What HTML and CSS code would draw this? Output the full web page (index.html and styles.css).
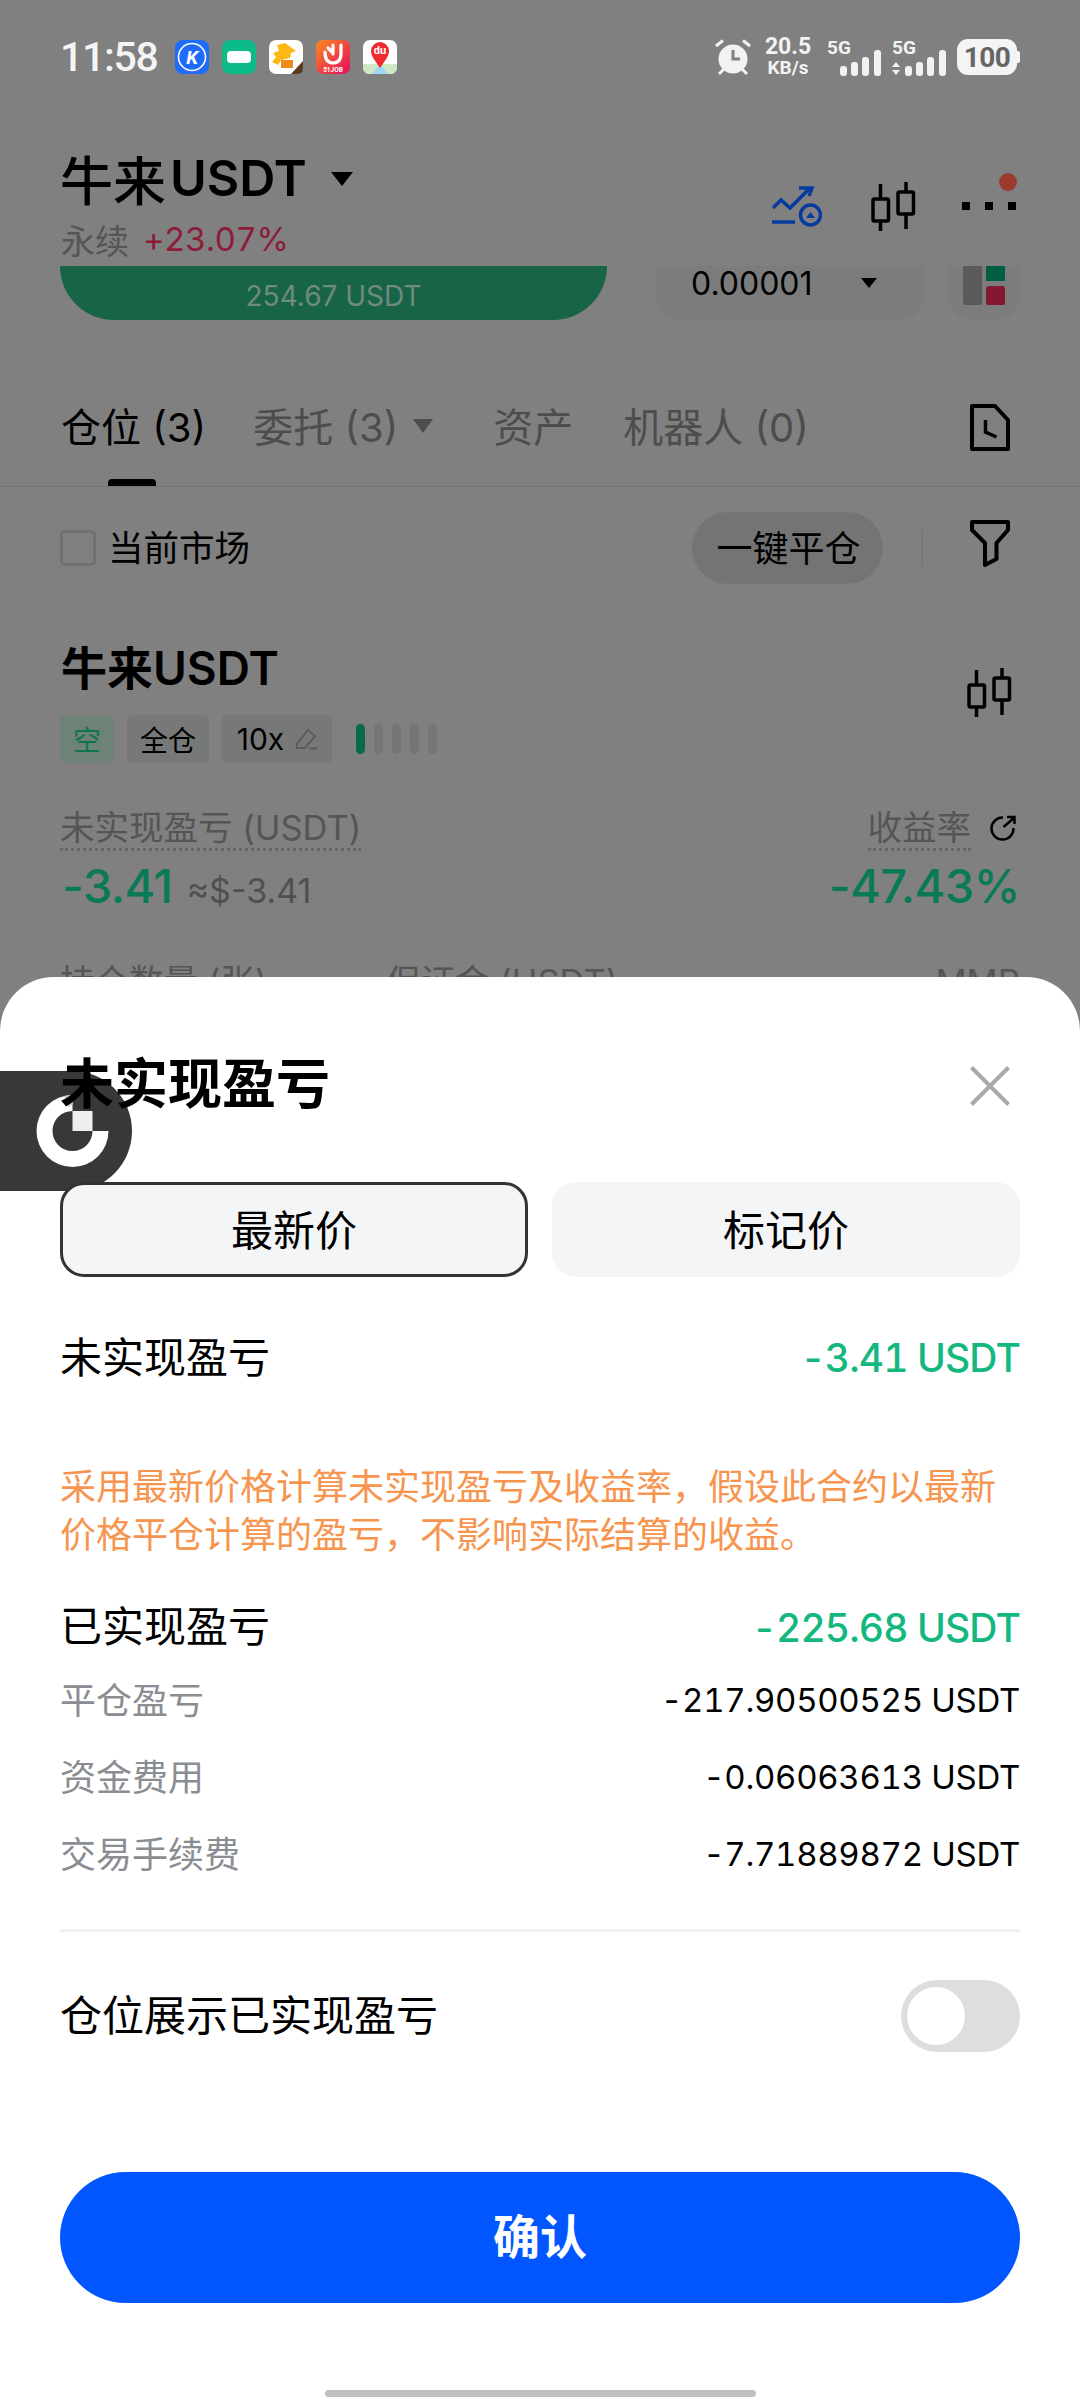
FILE: index.html
```html
<!DOCTYPE html>
<html lang="zh-CN">
<head>
<meta charset="utf-8">
<title>牛来USDT</title>
<link rel="stylesheet" href="styles.css">
</head>
<body>
<div class="screen">
  <div class="backdrop">
    <div class="status">
      <span class="time">11:58</span>
      <div class="apps">
        <svg class="app" viewBox="0 0 34 34"><rect width="34" height="34" rx="8" fill="#1f6bfa"/><circle cx="17" cy="17" r="13.5" fill="none" stroke="#fff" stroke-width="1.6"/><text x="17" y="23.5" text-anchor="middle" class="app-k">K</text></svg>
        <svg class="app" viewBox="0 0 34 34"><rect width="34" height="34" rx="8" fill="#0dbb88"/><rect x="5" y="11" width="24" height="12" rx="4" fill="#fff"/></svg>
        <svg class="app" viewBox="0 0 34 34"><rect width="34" height="34" rx="7" fill="#fff"/><path d="M4 13 L10 11 L8 5 L16 3 L27 11 L22 13 L21 18 L12 20 L9 25 L3 22 L7 17 Z" fill="#fdb813"/><rect x="12" y="20" width="12" height="8" fill="#f08a1c"/><path d="M34 21 V28 Q34 34 28 34 H22 Z" fill="#5b3a1e"/></svg>
        <svg class="app" viewBox="0 0 34 34"><defs><linearGradient id="jobg" x1="0" y1="0" x2="1" y2="1"><stop offset="0" stop-color="#fb8a1f"/><stop offset="1" stop-color="#e6085f"/></linearGradient></defs><rect width="34" height="34" rx="7" fill="url(#jobg)"/><path d="M9 12 Q9 23 17 23 Q25 23 25 13 V5 M17 5 V14 M12 8 L16 12" fill="none" stroke="#fff" stroke-width="3.2" stroke-linecap="round"/><text x="17" y="32" text-anchor="middle" class="app-job">51JOB</text></svg>
        <svg class="app" viewBox="0 0 34 34"><rect width="34" height="34" rx="7" fill="#fff"/><path d="M0 24 H34 V27 Q34 34 27 34 H7 Q0 34 0 27 Z" fill="#cfe8c4"/><path d="M9 34 L17 24 L25 34 Z" fill="#9ed8f5"/><path d="M17 28 C11 19 8 16 8 11 A9 9 0 0 1 26 11 C26 16 23 19 17 28 Z" fill="#ee2b2e"/><text x="17" y="14" text-anchor="middle" class="app-du">du</text></svg>
      </div>
      <div class="sys">
        <svg class="alarm" viewBox="0 0 36 36"><circle cx="18" cy="20" r="14.5" fill="#f2f2f2"/><path d="M18 11 V20 H25" fill="none" stroke="#808080" stroke-width="3"/><path d="M1 7 L8 1.500 M35 7 L28 1.500 M4 35 L9 30 M32 35 L27 30" stroke="#f2f2f2" stroke-width="3"/></svg>
        <div class="speed"><span class="speed-n">20.5</span><span class="speed-u">KB/s</span></div>
        <div class="sig"><span class="sig-t">5G</span><svg class="sig-bars" viewBox="0 0 56 38"><rect x="15" y="28" width="7" height="10" rx="3" fill="#f2f2f2"/><rect x="26" y="24" width="7" height="14" rx="3" fill="#f2f2f2"/><rect x="37" y="19" width="7" height="19" rx="3" fill="#f2f2f2"/><rect x="49" y="12" width="7" height="26" rx="3" fill="#f2f2f2"/></svg></div>
        <div class="sig"><span class="sig-t">5G</span><svg class="sig-bars" viewBox="0 0 56 38"><path d="M2 29 L6 24 L10 29 Z M2 32 H10 L6 37 Z" fill="#f2f2f2"/><rect x="15" y="28" width="7" height="10" rx="3" fill="#f2f2f2"/><rect x="26" y="24" width="7" height="14" rx="3" fill="#f2f2f2"/><rect x="37" y="19" width="7" height="19" rx="3" fill="#f2f2f2"/><rect x="49" y="12" width="7" height="26" rx="3" fill="#f2f2f2"/></svg></div>
        <div class="battery"><span class="battery-n">100</span></div>
      </div>
    </div>

    <div class="head">
      <div class="pair-col">
        <div class="pair"><span class="pair-cjk">牛来</span><span>USDT</span><i class="caret caret-lg"></i></div>
        <div class="sub"><span class="sub-k">永续</span><span class="sub-v">+23.07%</span></div>
      </div>
      <div class="tools">
        <svg class="tool-blue" viewBox="0 0 50 41" fill="none" stroke="#063a9e" stroke-width="3.500"><path d="M1 22 L9 14 L18 22 L37 3"/><path d="M27 2 H40 L37 10"/><circle cx="38.500" cy="29" r="10"/><path d="M0 36 H23"/><path d="M34 32 L38.500 26 L43 32 Z" fill="#063a9e" stroke="none"/></svg>
        <svg class="tool-candle" viewBox="0 0 45 49" fill="none" stroke="#000" stroke-width="3.500"><rect x="2" y="17" width="15.500" height="22" rx="1.500"/><path d="M9.500 2 V17 M9.500 39 V49"/><rect x="27" y="10" width="15.500" height="22" rx="1.500"/><path d="M35 0 V10 M35 32 V47"/></svg>
        <div class="more"><i></i><i></i><i></i><b class="red-dot"></b></div>
      </div>
    </div>

    <div class="ticket">
      <div class="slider">254.67 USDT</div>
      <div class="select"><span>0.00001</span><i class="caret caret-sm"></i></div>
      <div class="layout-box"><i class="lb-grey"></i><div class="lb-col"><i class="lb-green"></i><i class="lb-red"></i></div></div>
    </div>

    <div class="tabs">
      <div class="tab tab-on">仓位 (3)</div>
      <div class="tab tab-order">委托 (3)<i class="caret caret-tab"></i></div>
      <div class="tab tab-asset">资产</div>
      <div class="tab">机器人 (0)</div>
      <svg class="doc" viewBox="0 0 40 47" fill="none" stroke="#000" stroke-width="4"><path d="M2 2 H25 L38 16 V45 H2 Z" stroke-linejoin="round"/><path d="M15.500 16 V28 L26.500 33" stroke-width="3.500"/></svg>
    </div>

    <div class="filter-row">
      <span class="check"></span>
      <span class="check-label">当前市场</span>
      <span class="pill">一键平仓</span>
      <i class="sep"></i>
      <svg class="funnel" viewBox="0 0 40 47" fill="none" stroke="#000" stroke-width="4" stroke-linejoin="round"><path d="M2 2 H38 V10 L26.500 23 V39 L15 45 V23 L2 10 Z"/></svg>
    </div>

    <div class="pos-top">
      <div>
        <div class="pos-title">牛来USDT</div>
        <div class="tags">
          <span class="tag tag-short">空</span>
          <span class="tag tag-mode">全仓</span>
          <span class="tag tag-lev">10x<svg class="pen" viewBox="0 0 22 22" fill="none" stroke="#5b5b5b" stroke-width="2"><path d="M2 16 L13 2 L20 8 L10 20 H2 Z"/><path d="M14 20.500 H22"/></svg></span>
          <div class="risk"><i class="r-on"></i><i></i><i></i><i></i><i></i></div>
        </div>
      </div>
      <svg class="pos-candle" viewBox="0 0 45 49" fill="none" stroke="#000" stroke-width="3.500"><rect x="2" y="17" width="15.500" height="22" rx="1.500"/><path d="M9.500 2 V17 M9.500 39 V49"/><rect x="27" y="10" width="15.500" height="22" rx="1.500"/><path d="M35 0 V10 M35 32 V47"/></svg>
    </div>

    <div class="metrics">
      <div class="metric">
        <span class="m-label">未实现盈亏 (USDT)</span>
        <div class="m-val"><span class="m-big">-3.41</span><span class="m-approx">≈$-3.41</span></div>
      </div>
      <div class="metric metric-r">
        <div class="m-head"><span class="m-label">收益率</span><svg class="share" viewBox="0 0 27 27" fill="none" stroke="#000" stroke-width="2.500"><path d="M14 2.500 A11 11 0 1 0 24.500 13"/><path d="M14.500 12 L25.500 2.500 M18 2 H25.500 V9"/></svg></div>
        <div class="m-val"><span class="m-big">-47.43%</span></div>
      </div>
    </div>

    <div class="clipped">
      <span>持仓数量 (张)</span>
      <span>保证金 (USDT)</span>
      <span>MMR</span>
    </div>
  </div>

  <div class="sheet">
    <div class="float">
      <svg class="float-mark" viewBox="0 0 132 120"><path d="M72.500 24 A36 36 0 1 0 108.500 60 H92.500 A20 20 0 1 1 72.500 40 Z" fill="#fff"/><rect x="72.500" y="40" width="20" height="20" fill="#eee"/><path d="M64 25 L72.500 24 V34 L68 36 Z" fill="#ccc"/></svg>
    </div>
    <div class="sheet-head">
      <h2 class="sheet-title">未实现盈亏</h2>
      <svg class="close" viewBox="0 0 40 40" stroke="#a9a9a9" stroke-width="4"><path d="M1.500 1.500 L38.500 38.500 M38.500 1.500 L1.500 38.500"/></svg>
    </div>
    <div class="seg">
      <div class="seg-btn seg-on">最新价</div>
      <div class="seg-btn">标记价</div>
    </div>
    <div class="line line-first"><span class="line-k">未实现盈亏</span><span class="gain">-3.41 USDT</span></div>
    <p class="note">采用最新价格计算未实现盈亏及收益率，假设此合约以最新价格平仓计算的盈亏，不影响实际结算的收益。</p>
    <div class="line line-real"><span class="line-k">已实现盈亏</span><span class="gain">-225.68 USDT</span></div>
    <div class="details">
      <div class="detail"><span class="d-k">平仓盈亏</span><span class="d-v">-217.90500525 USDT</span></div>
      <div class="detail"><span class="d-k">资金费用</span><span class="d-v">-0.06063613 USDT</span></div>
      <div class="detail"><span class="d-k">交易手续费</span><span class="d-v">-7.71889872 USDT</span></div>
    </div>
    <div class="rule"></div>
    <div class="toggle-row"><span class="line-k">仓位展示已实现盈亏</span><span class="toggle"><i></i></span></div>
    <button class="confirm">确认</button>
    <div class="home"></div>
  </div>
</div>
</body>
</html>
```

FILE: styles.css
```css
* { box-sizing: border-box; }
html, body { margin: 0; padding: 0; }
body { width: 1080px; height: 2400px; overflow: hidden; }
i { display: block; font-style: normal; }
svg { display: block; flex: none; }

.screen {
  position: relative;
  width: 1080px;
  height: 2400px;
  overflow: hidden;
  background: #808080;
  color: #000;
  font-family: Inter, "Noto Sans CJK SC", sans-serif;
}

/* status bar */
.status { display: flex; align-items: center; height: 114px; padding: 0 63px 0 60px; }
.time { font-family: Roboto, sans-serif; font-weight: 500; font-size: 41px; line-height: 1; letter-spacing: -1.300px; color: #f4f4f4; }
.apps { display: flex; gap: 13px; margin-left: 17px; }
.app { width: 34px; height: 34px; }
.app-k { font: italic 700 19px Roboto, sans-serif; fill: #fff; }
.app-job { font: 700 6.500px Roboto, sans-serif; fill: #fff; }
.app-du { font: 700 11px Roboto, sans-serif; fill: #fff; }
.sys { display: flex; align-items: center; margin-left: auto; }
.alarm { width: 36px; height: 36px; }
.speed { display: flex; flex-direction: column; align-items: center; width: 46px; margin-left: 14px; color: #f2f2f2; font-family: Roboto, sans-serif; font-weight: 700; }
.speed-n { font-size: 23px; line-height: 21px; }
.speed-u { font-size: 19px; line-height: 21px; }
.sig { position: relative; width: 56px; height: 38px; margin-left: 14px; }
.sig + .sig { margin-left: 9px; }
.sig-bars { width: 56px; height: 38px; }
.sig-t { position: absolute; left: 2px; top: 0; font: 700 19px/20px Roboto, sans-serif; color: #f2f2f2; }
.battery { display: flex; align-items: center; justify-content: center; position: relative; width: 60px; height: 36px; margin-left: 11px; border-radius: 11px; background: #f4f4f4; }
.battery::after { content: ""; position: absolute; right: -3px; top: 12px; width: 3px; height: 12px; border-radius: 0 2px 2px 0; background: #f4f4f4; }
.battery-n { font: 700 28px Roboto, sans-serif; color: #666; letter-spacing: -0.5px; }

/* pair header */
.head { display: flex; justify-content: space-between; height: 152px; padding: 0 64px 0 60px; }
.pair { display: flex; align-items: center; height: 60px; margin-top: 34px; font-size: 50px; font-weight: 600; }
.pair-cjk { font-size: 53px; font-weight: 500; margin-right: 4px; }
.caret { width: 0; height: 0; border-style: solid; border-color: #000 transparent transparent; }
.caret-lg { margin: 2px 0 0 24px; border-width: 14px 11px 0; }
.sub { display: flex; align-items: center; height: 40px; margin-top: 11px; padding-left: 1px; font-size: 34px; }
.sub-k { color: #555; }
.sub-v { margin-left: 14px; color: #8c1c38; font-variant-numeric: tabular-nums; font-size: 33px; letter-spacing: -0.400px; }
.tools { display: flex; align-items: flex-start; padding-top: 68px; }
.tool-blue { width: 50px; height: 41px; margin-top: 4px; }
.tool-candle { width: 45px; height: 49px; margin-left: 49px; }
.more { position: relative; display: flex; gap: 15px; margin: 20px 0 0 46px; }
.more > i { width: 8px; height: 8px; background: #000; }
.red-dot { position: absolute; right: -1px; top: -29px; width: 18px; height: 18px; border-radius: 50%; background: #9b3b2b; }

/* clipped order panel */
.ticket { display: flex; height: 54px; padding: 0 60px; }
.slider { display: flex; align-items: center; justify-content: center; width: 547px; border-radius: 0 0 54px 54px; background: #186447; color: #6f8a7f; font-size: 28px; padding-top: 6px; }
.select { display: flex; align-items: center; width: 269px; margin-left: 48px; padding: 0 0 20px 36px; border-radius: 0 0 24px 24px; background: #7b7c7b; font-size: 32px; }
.caret-sm { margin-left: 48px; border-width: 10px 8px 0; }
.layout-box { display: flex; gap: 4px; width: 72px; margin-left: 24px; padding-left: 15px; border-radius: 0 0 24px 24px; background: #7b7c7b; }
.lb-grey { width: 19px; height: 39px; background: #5a5a5a; border-radius: 0 0 2px 2px; }
.lb-col { display: flex; flex-direction: column; gap: 5px; }
.lb-green { width: 19px; height: 15px; background: #005f42; }
.lb-red { width: 19px; height: 19px; background: #851732; border-radius: 3px 3px 2px 2px; }

/* tabs */
.tabs { display: flex; align-items: flex-start; height: 107px; margin-top: 60px; padding: 0 70px 0 61px; border-bottom: 1px solid #757575; }
.tab { position: relative; display: flex; align-items: center; height: 56px; margin-top: 17px; margin-right: 50px; font-size: 40px; color: #4d4d4d; }
.tab-on { margin-right: 47px; color: #000; }
.tab-on::after { content: ""; position: absolute; left: 47px; bottom: -33px; width: 48px; height: 7px; border-radius: 4px 4px 0 0; background: #000; }
.caret-tab { margin-left: 15px; margin-top: 2px; border-width: 14px 10px 0; border-top-color: #4d4d4d; }
.tab-order { margin-right: 60px; }
.doc { width: 40px; height: 47px; margin-left: auto; margin-top: 24px; }

/* filter row */
.filter-row { display: flex; align-items: center; height: 122px; padding: 0 70px 0 60px; }
.check { width: 36px; height: 36px; border: 3px solid #717171; border-radius: 5px; }
.check-label { margin: 0 0 5px 12px; font-size: 35.500px; }
.pill { display: flex; align-items: center; justify-content: center; width: 191px; height: 72px; margin-left: auto; padding: 0 0 5px 2px; border-radius: 36px; background: #747474; font-size: 36px; }
.sep { width: 2px; height: 36px; margin-left: 38px; background: #787878; }
.funnel { width: 40px; height: 47px; margin: 0 0 9px 47px; }

/* position */
.pos-top { display: flex; justify-content: space-between; margin-top: 31px; padding: 0 68px 0 60px; }
.pos-title { height: 56px; line-height: 56px; padding-left: 1px; font-size: 46px; font-weight: 600; }
.tags { display: flex; align-items: center; height: 48px; margin-top: 19px; }
.tag { display: flex; align-items: center; justify-content: center; height: 48px; border-radius: 5px; background: #767977; font-size: 28px; }
.tag-short { width: 54px; background: #6f8278; color: #0f7550; }
.tag-mode { width: 82px; margin-left: 13px; }
.tag-lev { width: 110px; margin-left: 13px; font-size: 30px; gap: 11px; }
.pen { width: 22px; height: 22px; }
.risk { display: flex; gap: 9px; margin-left: 24px; }
.risk > i { width: 9px; height: 30px; border-radius: 5px; background: #757575; }
.risk > .r-on { background: #0a6a47; }
.pos-candle { width: 45px; height: 49px; margin-top: 28px; }

.metrics { display: flex; justify-content: space-between; margin-top: 45px; padding: 0 60px; }
.metric { display: flex; flex-direction: column; align-items: flex-start; }
.metric-r { align-items: flex-end; }
.m-head { display: flex; align-items: flex-start; gap: 18px; padding-right: 4px; }
.share { width: 27px; height: 27px; margin-top: 7px; }
.m-label { height: 43px; line-height: 40px; font-size: 34.500px; color: #555; border-bottom: 3px dotted #676767; }
.m-val { display: flex; align-items: baseline; height: 54px; margin-top: 8px; line-height: 54px; }
.m-big { font-size: 47px; font-weight: 500; letter-spacing: -0.500px; color: #0a7a56; padding-left: 2px; }
.m-approx { margin-left: 14px; font-size: 34px; color: #505050; }
.clipped { display: grid; grid-template-columns: 326px 1fr auto; margin-top: 49px; padding: 0 60px; line-height: 40px; font-size: 34.500px; color: #555; }

/* bottom sheet */
.sheet { position: absolute; left: 0; right: 0; top: 977px; bottom: 0; display: flex; flex-direction: column; padding: 75px 60px 0; border-radius: 54px 54px 0 0; background: #fff; color: #000; }
.float { position: absolute; left: 0; top: 94px; width: 132px; height: 120px; border-radius: 0 60px 60px 0; background: #383838; }
.float-mark { width: 132px; height: 120px; }
.sheet-head { position: relative; display: flex; justify-content: space-between; align-items: center; height: 60px; }
.sheet-title { margin: 5px 0 0; font-size: 54px; font-weight: 600; line-height: 60px; }
.close { width: 40px; height: 40px; margin: 7px 10px 0 0; }
.seg { position: relative; display: grid; grid-template-columns: 468px 468px; gap: 24px; margin-top: 70px; }
.seg-btn { display: flex; align-items: center; justify-content: center; height: 95px; padding-bottom: 5px; border-radius: 24px; background: #f4f5f6; font-size: 42px; }
.seg-on { border: 3px solid #333; }
.line { display: flex; justify-content: space-between; align-items: center; height: 50px; font-size: 42px; }
.line-k { padding-bottom: 5px; }
.line-first { margin-top: 55px; }
.line-real { margin-top: 43px; }
.line-real .line-k { padding-bottom: 7px; }
.gain { color: #14b87e; font-weight: 500; font-size: 39px; letter-spacing: -0.900px; font-variant-numeric: tabular-nums; }
.note { margin: 81px 0 0; font-size: 36px; line-height: 48px; color: #f7954f; }
.details { display: flex; flex-direction: column; gap: 27px; margin-top: 24px; }
.detail { display: flex; justify-content: space-between; align-items: center; height: 50px; }
.d-k { padding-bottom: 7px; font-size: 36px; color: #8a8d91; }
.d-v { padding-bottom: 2px; font-size: 33px; letter-spacing: -0.300px; font-variant-numeric: tabular-nums; }
.rule { height: 3px; margin-top: 49px; background: #f0f1f2; }
.toggle-row { display: flex; justify-content: space-between; align-items: center; height: 72px; margin-top: 48px; font-size: 42px; }
.toggle-row .line-k { padding-bottom: 7px; }
.toggle { width: 119px; height: 72px; padding: 7px 6px; border-radius: 36px; background: #dcdedf; }
.toggle > i { width: 58px; height: 58px; border-radius: 50%; background: #fff; }
.confirm { height: 131px; margin-top: 120px; padding: 0 0 8px; border: 0; border-radius: 66px; background: #0256ff; color: #fff; font-family: inherit; font-size: 47px; font-weight: 700; }
.home { flex: none; width: 431px; height: 7px; margin: 87px auto 0; border-radius: 4px; background: #bfbfbf; }
```
